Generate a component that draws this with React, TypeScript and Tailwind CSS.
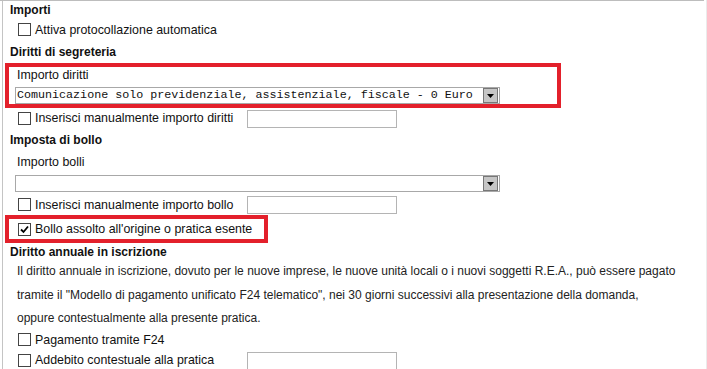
import React from "react";

const font = "font-['Liberation_Sans',Arial,sans-serif]";

function CheckBox({ checked = false }: { checked?: boolean }) {
  return (
    <span className="flex h-[13px] w-[13px] shrink-0 items-center justify-center border border-[#444] bg-white">
      {checked && (
        <svg width="9" height="9" viewBox="0 0 9 9">
          <polyline
            points="1,4.5 3.5,7 8,1.5"
            fill="none"
            stroke="#000"
            strokeWidth="1.8"
          />
        </svg>
      )}
    </span>
  );
}

function Header({ children, className = "" }: { children: React.ReactNode; className?: string }) {
  return (
    <div className={`flex items-center pl-[7px] text-[12px] font-bold text-[#111] ${className}`}>
      {children}
    </div>
  );
}

function CheckRow({
  label,
  checked,
  withInput,
  className = "",
}: {
  label: string;
  checked?: boolean;
  withInput?: boolean;
  className?: string;
}) {
  return (
    <div className={`flex items-center ${className}`}>
      <div className="flex w-[244px] items-center pl-[15px]">
        <CheckBox checked={checked} />
        <span className="ml-[4px] text-[12.4px] text-[#111]">{label}</span>
      </div>
      {withInput && (
        <div className="h-[18px] w-[150px] border border-[#b4b4b4] bg-white" />
      )}
    </div>
  );
}

function Select({ value }: { value?: string }) {
  return (
    <div className="flex h-[17px] w-[485px] items-center justify-between border border-[#a8a8a8] bg-white pl-[1px] pr-[1px]">
      <span className="font-['Liberation_Mono','Courier_New',monospace] text-[11.7px] leading-none text-[#111]">
        {value}
      </span>
      <span className="flex h-[15px] w-[15px] items-center justify-center border border-[#777] bg-[#c6c6c6]">
        <svg width="7" height="4" viewBox="0 0 7 4">
          <polygon points="0,0 7,0 3.5,4" fill="#000" />
        </svg>
      </span>
    </div>
  );
}

export default function App() {
  return (
    <div className={`flex h-[369px] w-[707px] bg-white ${font}`}>
      <div className="h-full w-[704px] border-t border-[#bdbdbd]">
        <div className="ml-[2px] h-full border-l border-[#c4c4c4]">
          <Header className="h-[18px]">Importi</Header>
          <CheckRow className="h-[22px]" label="Attiva protocollazione automatica" />
          <Header className="h-[22px]">Diritti di segreteria</Header>

          <div className="ml-[2px] h-[45px] w-[556px] border-4 border-[#e3202b]">
            <div className="flex h-[17px] items-center pl-[8px] text-[12.4px] text-[#111]">
              Importo diritti
            </div>
            <div className="ml-[6px] mt-[3px]">
              <Select value="Comunicazione solo previdenziale, assistenziale, fiscale - 0 Euro" />
            </div>
          </div>

          <CheckRow
            className="h-[21px]"
            label="Inserisci manualmente importo diritti"
            withInput
          />
          <Header className="h-[22px]">Imposta di bollo</Header>
          <div className="flex h-[23px] items-center pl-[14px] text-[12.4px] text-[#111]">
            Importo bolli
          </div>
          <div className="h-[21px] pl-[12px] pt-[1px]">
            <Select />
          </div>
          <CheckRow
            className="h-[20px]"
            label="Inserisci manualmente importo bollo"
            withInput
          />

          <div className="ml-[2px] flex h-[28px] w-[263px] items-center border-4 border-[#e3202b] pl-[9px]">
            <CheckBox checked />
            <span className="ml-[4px] text-[12.4px] text-[#111]">
              Bollo assolto all'origine o pratica esente
            </span>
          </div>

          <Header className="h-[17px]">Diritto annuale in iscrizione</Header>
          <p className="pl-[14px] text-[12px] leading-[23.5px] text-[#222]">
            Il diritto annuale in iscrizione, dovuto per le nuove imprese, le nuove unità locali o i nuovi soggetti R.E.A., può essere pagato
            <br />
            tramite il "Modello di pagamento unificato F24 telematico", nei 30 giorni successivi alla presentazione della domanda,
            <br />
            oppure contestualmente alla presente pratica.
          </p>
          <CheckRow className="h-[19px]" label="Pagamento tramite F24" />
          <CheckRow
            className="h-[21px] pt-[1px]"
            label="Addebito contestuale alla pratica"
            withInput
          />
        </div>
      </div>
      <div className="w-[2px]" />
      <div className="h-full w-[1px] bg-[#ebebeb]" />
    </div>
  );
}
